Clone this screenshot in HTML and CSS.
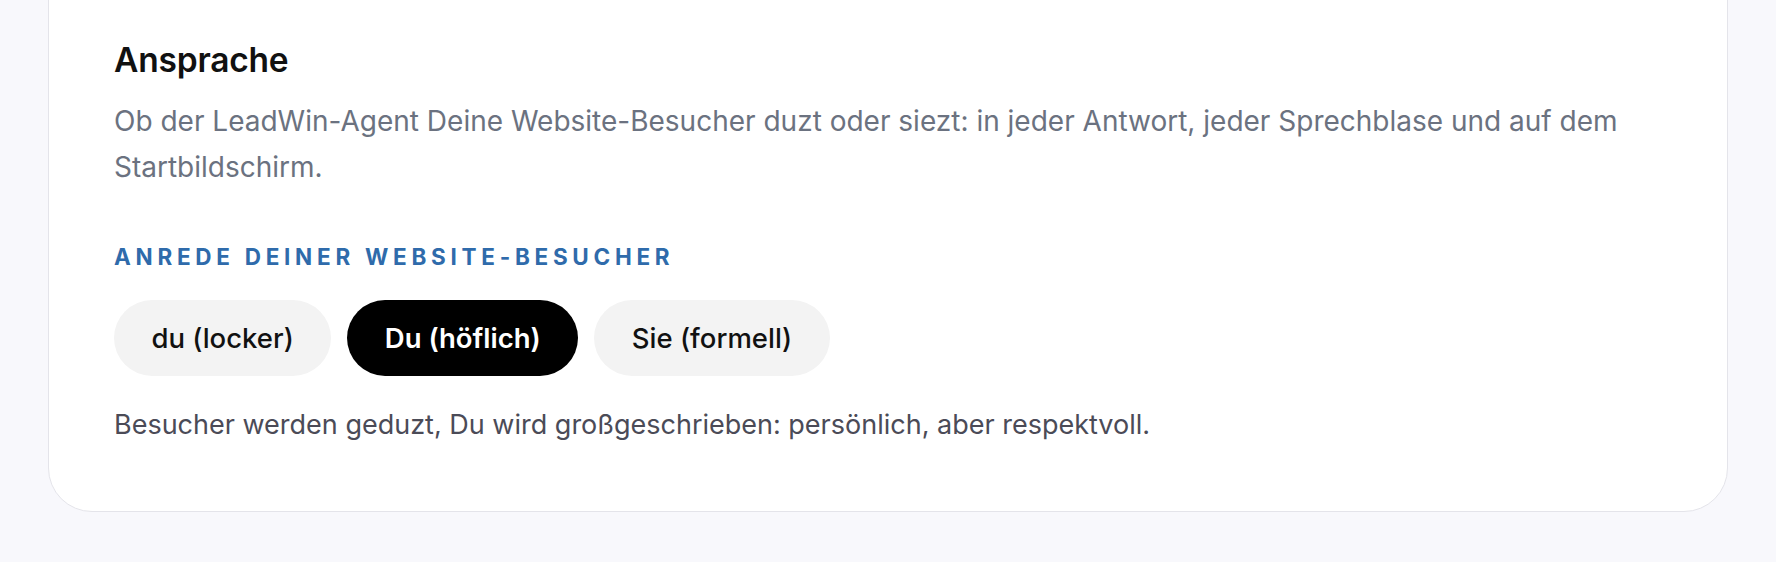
FILE: index.html
```html
<!DOCTYPE html>
<html lang="de">
<head>
<meta charset="utf-8">
<title>Ansprache</title>
<link rel="stylesheet" href="styles.css">
</head>
<body>
<main class="page">
  <section class="card">
    <h2 class="card-title">Ansprache</h2>
    <p class="card-desc">Ob der LeadWin-Agent Deine Website-Besucher duzt oder siezt: in jeder Antwort, jeder Sprechblase und auf dem Startbildschirm.</p>
    <div class="field-label">Anrede deiner Website-Besucher</div>
    <div class="pill-group">
      <button class="pill">du (locker)</button>
      <button class="pill pill-active">Du (höflich)</button>
      <button class="pill">Sie (formell)</button>
    </div>
    <p class="hint">Besucher werden geduzt, Du wird großgeschrieben: persönlich, aber respektvoll.</p>
  </section>
</main>
</body>
</html>
```

FILE: styles.css
```css
* { box-sizing: border-box; }
html, body {
  margin: 0;
  padding: 0;
  background: #f8f8fc;
  font-family: Inter, "Noto Sans", sans-serif;
}
.page {
  padding: 0 48px;
  overflow: hidden;
  height: 562px;
}
.card {
  margin-top: -60px;
  background: #ffffff;
  border: 1px solid #e4e4ea;
  border-radius: 44px;
  padding: 98.7px 64px 64px 65px;
}
.card-title {
  margin: 0;
  font-size: 33.5px;
  line-height: 1.2;
  font-weight: 600;
  color: #111111;
  letter-spacing: -0.2px;
}
.card-desc {
  margin: 19.5px 0 0;
  font-size: 28px;
  line-height: 45.5px;
  color: #6b7280;
}
.field-label {
  margin-top: 51.4px;
  font-size: 22.5px;
  line-height: 1.3;
  font-weight: 700;
  letter-spacing: 0.21em;
  text-transform: uppercase;
  color: #2f6bab;
}
.pill-group {
  display: flex;
  gap: 16px;
  margin-top: 29px;
}
.pill {
  font-family: inherit;
  border: none;
  border-radius: 999px;
  background: #f3f3f3;
  color: #111111;
  font-size: 27.5px;
  font-weight: 500;
  line-height: 32px;
  padding: 22px 37.5px;
  cursor: pointer;
}
.pill-active {
  background: #000000;
  color: #ffffff;
  font-weight: 600;
}
.hint {
  margin: 25.5px 0 0;
  font-size: 27px;
  line-height: 1.7;
  color: #4b4b57;
}
```
